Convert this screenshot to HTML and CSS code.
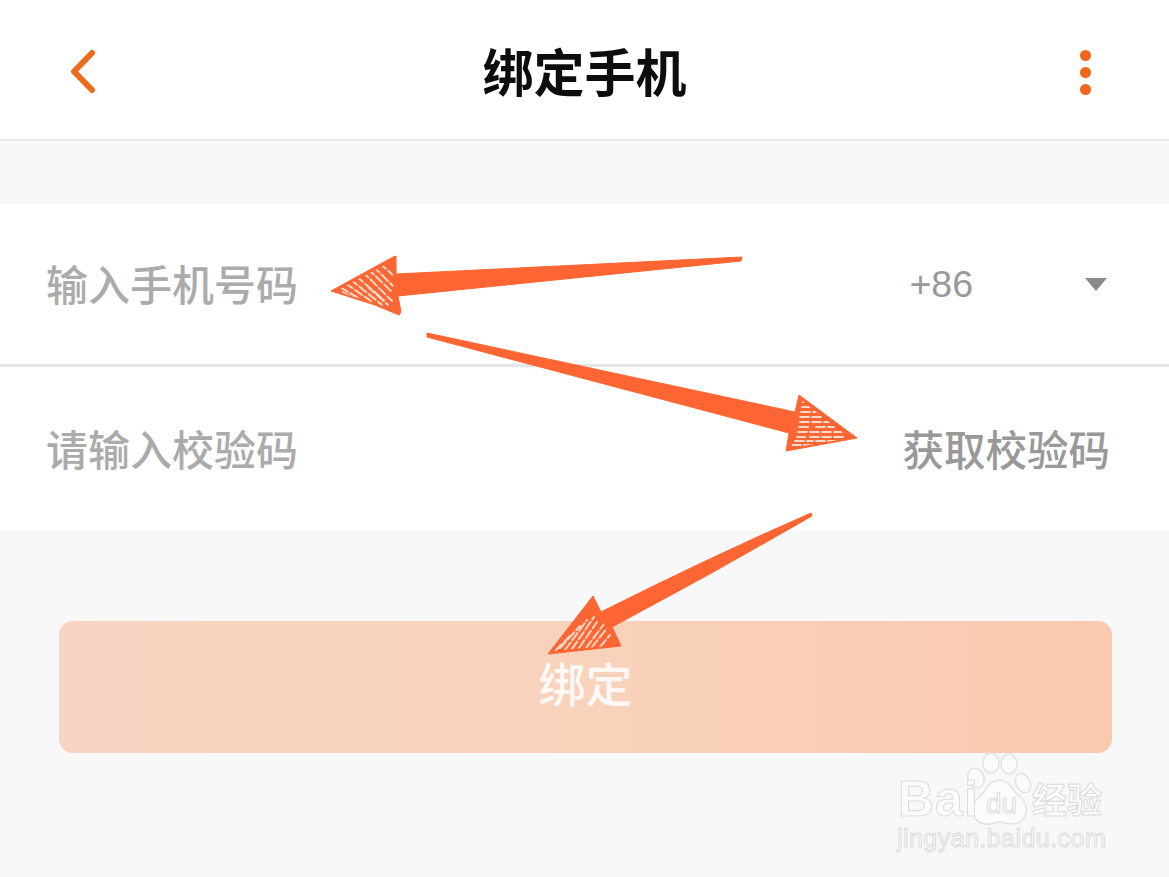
FILE: index.html
```html
<!DOCTYPE html>
<html lang="zh-CN">
<head>
<meta charset="utf-8">
<title>绑定手机</title>
<link rel="stylesheet" href="styles.css">
</head>
<body>
<div class="page">
  <header class="nav">
    <svg class="back" width="30" height="44" viewBox="0 0 30 44"><path d="M24 3 L6 21.500 L24 40" /></svg>
    <h1 class="title">绑定手机</h1>
    <div class="more"><i></i><i></i><i></i></div>
  </header>
  <section class="form">
    <div class="row row-phone">
      <span class="ph">输入手机号码</span>
      <span class="code">+86</span>
      <span class="tri"></span>
    </div>
    <div class="row row-verify">
      <span class="ph">请输入校验码</span>
      <span class="get">获取校验码</span>
    </div>
  </section>
  <div class="btn">绑定</div>

  <svg class="arrows" width="1169" height="877" viewBox="0 0 1169 877">
    <defs>
      <clipPath id="h1"><path d="M336 291 L392 261 L395 310 Z"/></clipPath>
      <clipPath id="h2"><path d="M802 401 L850 438 L791 448 Z"/></clipPath>
      <clipPath id="h3"><path d="M553 651 L592 605 L617 645 Z"/></clipPath>
    </defs>
    <path class="ar" d="M331 291 L393 257 L396 256 L396 274 L742 257 L741 261 L398 296 L401 312 L399 315 L375 305 Z"/>
    <path class="ar" d="M427 333 L795 412 L799 395 L857 438 L786 451 L789 433 L427 337 Z"/>
    <path class="ar" d="M811 513 L812 516 Q712 574 612 627 L621 646 L548 654 L593 596 L601 612 Q708 558 811 513 Z"/>
    <g class="hatch" clip-path="url(#h1)">
      <path d="M340 287l20 12M345 283l26 18M350 279l32 26M356 276l28 24M362 271l30 30M367 268l25 24M373 266l20 20M379 263l14 12M343 292l12 7M352 297l12 6M368 287l20 18"/>
    </g>
    <g class="hatch h2" clip-path="url(#h2)">
      <path d="M802 402h10M802 407h14M801 412h20M800 417h24M800 422h30M799 427h12M816 427h18M798 432h44M797 437h8M810 437h36M795 441h18M816 441h32M792 445h40"/>
    </g>
    <g class="hatch" clip-path="url(#h3)">
      <path d="M560 648l20-22M565 650l22-30M572 649l22-32M579 648l18-26M586 648l18-24M592 647l16-20M600 647l10-12M556 650l14-14"/>
    </g>
  </svg>

  <div class="mark">
    <svg class="paw" width="76" height="76" viewBox="0 0 76 76">
      <ellipse cx="29" cy="12" rx="8" ry="10"/>
      <ellipse cx="47" cy="13" rx="8" ry="10"/>
      <ellipse cx="14" cy="27" rx="8" ry="10" transform="rotate(-20 14 27)"/>
      <ellipse cx="61" cy="32" rx="7" ry="10" transform="rotate(-25 61 32)"/>
      <path d="M38 29c10 0 12 11 20 17 11 9 7 27-8 27-5 0-8-2-12-2s-8 3-14 2C10 72 6 56 16 47c9-7 10-18 22-18z"/>
    </svg>
    <span class="bai">Bai</span>
    <span class="du">du</span>
    <span class="jy">经验</span>
    <span class="url">jingyan.baidu.com</span>
  </div>
</div>
</body>
</html>
```
FILE: styles.css
```css
* { box-sizing: border-box; }
html, body { margin: 0; padding: 0; }
body {
  width: 1169px;
  height: 877px;
  overflow: hidden;
  font-family: "Noto Sans CJK SC", "Noto Sans", sans-serif;
}
.page {
  position: relative;
  width: 1169px;
  height: 877px;
  background: #f8f8f9;
  display: flex;
  flex-direction: column;
}
.nav {
  height: 141px;
  background: #fff;
  border-bottom: 2px solid #e6e6e6;
  display: flex;
  align-items: center;
  justify-content: space-between;
  padding: 0 78px 0 68px;
  position: relative;
}
.back { fill: none; stroke: #ee6a1c; stroke-width: 6; stroke-linecap: round; stroke-linejoin: round; margin-top: 5px; }
.title {
  position: absolute;
  left: 0;
  right: 0;
  top: 33px;
  margin: 0;
  text-align: center;
  font-size: 51px;
  line-height: 74px;
  font-weight: 700;
  color: #0d0d0d;
}
.more { display: flex; flex-direction: column; gap: 6px; margin-top: 5px; }
.more i { display: block; width: 11px; height: 11px; border-radius: 50%; background: #f0661a; }
.form { margin-top: 63px; background: #fff; }
.row { display: flex; align-items: center; padding-left: 46px; }
.row-phone { height: 163px; border-bottom: 3px solid #e6e6e6; }
.row-verify { height: 164px; padding-right: 60px; }
.ph { font-size: 42px; line-height: 60px; color: #ababab; font-weight: 500; flex: 1; margin-top: -3px; }
.code { font-family: "Liberation Sans", sans-serif; font-size: 37.500px; color: #999; margin-right: 112px; }
.tri {
  width: 0; height: 0;
  margin-right: 62px;
  border-left: 11px solid transparent;
  border-right: 11px solid transparent;
  border-top: 13px solid #8a8a8a;
}
.get { font-size: 41.500px; line-height: 60px; color: #999; font-weight: 500; margin-top: -3px; margin-right: -1px; }
.btn {
  margin: 90px 57px 0 59px;
  height: 132px;
  border-radius: 14px;
  background: linear-gradient(90deg, #f8d5c3 0%, #f9d2bc 50%, #f9caaf 100%);
  color: rgba(255, 255, 255, 0.88);
  display: flex;
  align-items: center;
  justify-content: center;
  font-size: 47px;
  font-weight: 500;
  padding-bottom: 11px;
}
.arrows { position: absolute; left: 0; top: 0; pointer-events: none; }
.ar { fill: #fd6532; stroke: #fd6532; stroke-width: 1; stroke-linejoin: round; }
.hatch path { fill: none; stroke: #fcd9c8; stroke-width: 2; stroke-linecap: round; stroke-dasharray: 9 3; }
.hatch.h2 path { stroke-width: 1.800; }
.mark { position: absolute; left: 890px; top: 745px; width: 225px; height: 115px; }
.paw { position: absolute; left: 72px; top: 6px; fill: #fbfbfb; stroke: #e2e2e2; stroke-width: 1.500; }
.bai, .du, .jy, .url {
  position: absolute;
  color: #fbfbfb;
  -webkit-text-stroke: 1px #dcdcdc;
  white-space: nowrap;
}
.bai { left: 8px; top: 24px; font: 700 50px/60px "Liberation Sans", sans-serif; letter-spacing: 1px; }
.du { left: 96px; top: 42px; font: 400 28px/34px "Liberation Sans", sans-serif; }
.jy { left: 142px; top: 30px; font-size: 35px; line-height: 46px; font-weight: 700; }
.url { left: 7px; top: 78px; font: 400 25px/30px "Liberation Sans", sans-serif; letter-spacing: 0.450px; }
```
